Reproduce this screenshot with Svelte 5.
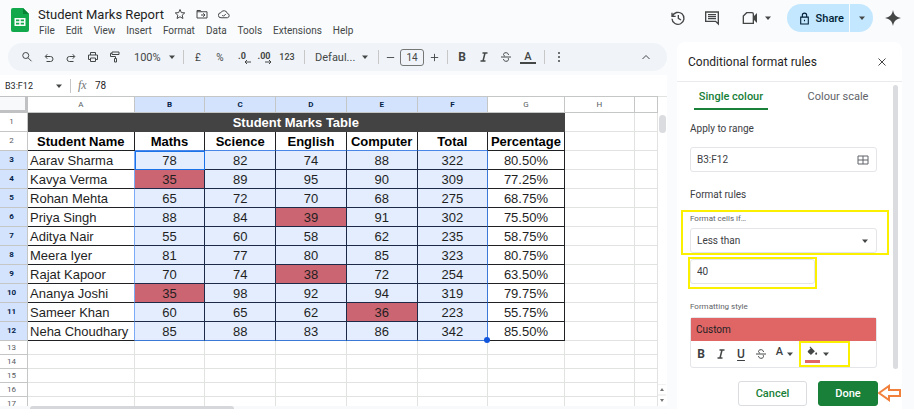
<script>
    // Sheet
    const menus = ["File", "Edit", "View", "Insert", "Format", "Data", "Tools", "Extensions", "Help"];
    const columns = ["A", "B", "C", "D", "E", "F", "G", "H", ""];
    const headings = ["Student Name", "Maths", "Science", "English", "Computer", "Total", "Percentage"];
    const students = [
        ["Aarav Sharma", 78, 82, 74, 88, 322, "80.50%"],
        ["Kavya Verma", 35, 89, 95, 90, 309, "77.25%"],
        ["Rohan Mehta", 65, 72, 70, 68, 275, "68.75%"],
        ["Priya Singh", 88, 84, 39, 91, 302, "75.50%"],
        ["Aditya Nair", 55, 60, 58, 62, 235, "58.75%"],
        ["Meera Iyer", 81, 77, 80, 85, 323, "80.75%"],
        ["Rajat Kapoor", 70, 74, 38, 72, 254, "63.50%"],
        ["Ananya Joshi", 35, 98, 92, 94, 319, "79.75%"],
        ["Sameer Khan", 60, 65, 62, 36, 223, "55.75%"],
        ["Neha Choudhary", 85, 88, 83, 86, 342, "85.50%"],
    ];
    const emptyRows = [13, 14, 15, 16, 17];

    // Rule
    let range = $state("B3:F12");
    let condition = $state("Less than");
    let limit = $state("40");
    let tab = $state("single");

    const inRange = (col) => col > 0 && col < 6;
    const matches = (value, col) =>
        inRange(col) && condition === "Less than" && limit !== "" && value < Number(limit);
</script>

{#snippet caret()}
    <svg class="caret" viewBox="0 0 8 8"><path d="M1 2.5h6L4 6z" /></svg>
{/snippet}

<div class="app">
    <header>
        <svg class="logo" viewBox="0 0 18 24">
            <path d="M2 0h10l6 6v16a2 2 0 0 1-2 2H2a2 2 0 0 1-2-2V2a2 2 0 0 1 2-2z" fill="#12a94c" />
            <path d="M12 0l6 6h-6z" fill="#078336" />
            <path d="M3.500 10h11v8h-11z" fill="#fff" />
            <path d="M5 11.500h3.300v1.800H5zM9.700 11.500H13v1.800H9.700zM5 14.700h3.300v1.800H5zM9.700 14.700H13v1.800H9.700z" fill="#12a94c" />
        </svg>
        <div class="heading">
            <div class="title">
                <h1>Student Marks Report</h1>
                <button aria-label="Star">
                    <svg class="line" viewBox="0 0 24 24"><path d="M12 3l2.700 6.200 6.800.6-5.100 4.500 1.500 6.700-5.900-3.500L6.100 21l1.500-6.700-5.100-4.500 6.800-.6z" /></svg>
                </button>
                <button aria-label="Move">
                    <svg class="line" viewBox="0 0 24 24"><path d="M2 5h7l2 2.500h11V20H2zM2 7.500h9M10 14h8M14.500 10.500L18 14l-3.500 3.500" /></svg>
                </button>
                <button aria-label="Saved to Drive">
                    <svg class="line" viewBox="0 0 24 24"><path d="M6 19.500a5 5 0 0 1-.5-10 7 7 0 0 1 13.200 1.500 4.300 4.300 0 0 1 0 8.500zM8.500 14l2.500 2.500 4.500-4.500" /></svg>
                </button>
            </div>
            <nav>
                {#each menus as menu}
                    <button>{menu}</button>
                {/each}
            </nav>
        </div>
        <div class="actions">
            <button aria-label="Version history">
                <svg class="line" viewBox="0 0 24 24"><path d="M3 4v5.500h5.500M3.500 9.500a9 9 0 1 1-.5 3.500M12.500 7.500v5l4 2.500" /></svg>
            </button>
            <button aria-label="Comments">
                <svg class="line" viewBox="0 0 24 24"><path d="M2.500 3h19v18l-4-4h-15zM6 7h12M6 10h12M6 13h12" /></svg>
            </button>
            <button class="meet" aria-label="Video call">
                <svg class="line" viewBox="0 0 24 24"><path d="M7 4h8a2 2 0 0 1 2 2v14H2V9z" /><path d="M18 10.500L21.500 7v10L18 13.500z" fill="#444746" /></svg>
                {@render caret()}
            </button>
            <div class="share">
                <button>
                    <svg class="line" viewBox="0 0 24 24"><path d="M5 9.500h14V22H5zM8 9.500V6a4 4 0 0 1 8 0v3.500M12 14.500v2.500" /></svg>
                    Share
                </button>
                <button class="more" aria-label="Share options">{@render caret()}</button>
            </div>
            <button aria-label="Gemini">
                <svg class="spark" viewBox="0 0 24 24"><path d="M12 0c1.500 7.500 4.500 10.500 12 12-7.500 1.500-10.500 4.500-12 12C10.500 16.500 7.500 13.500 0 12 7.500 10.500 10.500 7.500 12 0z" /></svg>
            </button>
        </div>
    </header>

    <div class="body">
        <main>
            <div class="toolbar">
                <button aria-label="Search"><svg class="line" viewBox="0 0 24 24"><circle cx="9.500" cy="9" r="6" /><path d="M14 13.500l7 7" /></svg></button>
                <button aria-label="Undo"><svg class="line" viewBox="0 0 24 24"><path d="M8.500 6.500l-4 4.500 4 4.500M5 11h10a5 5 0 0 1 0 10H7" /></svg></button>
                <button aria-label="Redo"><svg class="line" viewBox="0 0 24 24"><path d="M15.500 6.500l4 4.500-4 4.500M19 11H9a5 5 0 0 0 0 10h8" /></svg></button>
                <button aria-label="Print"><svg class="line" viewBox="0 0 24 24"><path d="M7 8V3h10v5M7 17H3V8h18v9h-4M7 14h10v7H7z" /></svg></button>
                <button aria-label="Paint format"><svg class="line" viewBox="0 0 24 24"><path d="M6 2h14v5H6zM6 4.500H3V11h10v4M11 15h4v7h-4z" /></svg></button>
                <button class="zoom">100% {@render caret()}</button>
                <i></i>
                <button class="small">£</button>
                <button class="small">%</button>
                <button class="decimal" aria-label="Decrease decimal places">.0<svg viewBox="0 0 8 6"><path d="M8 3H2M4 1L2 3l2 2" /></svg></button>
                <button class="decimal" aria-label="Increase decimal places">.00<svg viewBox="0 0 8 6"><path d="M0 3h6M4 1l2 2-2 2" /></svg></button>
                <button class="small number">123</button>
                <i></i>
                <button class="font">Defaul... {@render caret()}</button>
                <i></i>
                <button class="step" aria-label="Decrease font size"><svg class="line" viewBox="0 0 24 24"><path d="M4 12h16" /></svg></button>
                <input class="size" aria-label="Font size" value="14" />
                <button class="step" aria-label="Increase font size"><svg class="line" viewBox="0 0 24 24"><path d="M4 12h16M12 4v16" /></svg></button>
                <i></i>
                <button class="bold">B</button>
                <button aria-label="Italic"><svg class="line heavy" viewBox="0 0 24 24"><path d="M9 4h10M5 20h10M14 4l-4 16" /></svg></button>
                <button aria-label="Strikethrough"><svg class="line" viewBox="0 0 24 24"><path d="M2 12h20M17 8c0-6-10-6-10-1 0 2 2 3 3 3M7 16c0 6 10 6 10 1 0-1 0-2-1-3" /></svg></button>
                <button class="colour">A</button>
                <i></i>
                <button aria-label="More"><svg viewBox="0 0 24 24"><circle cx="12" cy="4" r="2" /><circle cx="12" cy="12" r="2" /><circle cx="12" cy="20" r="2" /></svg></button>
                <button class="collapse" aria-label="Hide the menus"><svg class="line" viewBox="0 0 24 24"><path d="M5 16l7-7 7 7" /></svg></button>
            </div>

            <div class="formula">
                <button>B3:F12 {@render caret()}</button>
                <i></i>
                <em>fx</em>
                <input aria-label="Formula" value="78" />
            </div>

            <div class="sheet">
                <div class="grid">
                    <table>
                        <colgroup>
                            <col class="c-num" /><col class="c-name" />
                            <col /><col /><col /><col /><col />
                            <col class="c-pct" /><col class="c-h" /><col class="c-rest" />
                        </colgroup>
                        <thead>
                            <tr>
                                <th class="corner" aria-label="Select all"></th>
                                {#each columns as name, i}
                                    <th class:picked={inRange(i)}>{name}</th>
                                {/each}
                            </tr>
                        </thead>
                        <tbody>
                            <tr>
                                <th>1</th>
                                <td class="banner" colspan="7">Student Marks Table</td>
                                <td></td><td></td>
                            </tr>
                            <tr class="names">
                                <th>2</th>
                                {#each headings as name, i}
                                    <td class="filled" class:above={inRange(i)}>{name}</td>
                                {/each}
                                <td></td><td></td>
                            </tr>
                            {#each students as student, r}
                                <tr class:last={r === students.length - 1}>
                                    <th class="picked">{r + 3}</th>
                                    {#each student as value, i}
                                        <td
                                            class="filled"
                                            class:name={i === 0}
                                            class:range={inRange(i)}
                                            class:edge={i === 5}
                                            class:low={matches(value, i)}
                                            class:active={r === 0 && i === 1}
                                        >
                                            {value}
                                            {#if i === 5 && r === students.length - 1}<span class="handle"></span>{/if}
                                        </td>
                                    {/each}
                                    <td></td><td></td>
                                </tr>
                            {/each}
                            {#each emptyRows as row}
                                <tr class="empty">
                                    <th>{row}</th>
                                    {#each columns as _}<td></td>{/each}
                                </tr>
                            {/each}
                        </tbody>
                    </table>
                </div>
                <div class="vbar">
                    <span></span>
                    <svg viewBox="0 0 8 22"><path d="M2 7l2-3 2 3zM2 15h4l-2 3z" /><path class="rule" d="M0 0h8M0 11h8" /></svg>
                </div>
            </div>
            <div class="hbar"><span></span></div>
        </main>

        <aside>
            <div class="top">
                <h2>Conditional format rules</h2>
                <button aria-label="Close"><svg class="line" viewBox="0 0 24 24"><path d="M5 5l14 14M19 5L5 19" /></svg></button>
            </div>
            <div class="scroll">
                <div class="form">
                    <div class="tabs">
                        <button class:on={tab === "single"} onclick={() => (tab = "single")}>Single colour</button>
                        <button class:on={tab === "scale"} onclick={() => (tab = "scale")}>Colour scale</button>
                    </div>
                    <label class="main" for="range">Apply to range</label>
                    <div class="field">
                        <input id="range" bind:value={range} />
                        <svg class="line" viewBox="0 0 24 24"><path d="M2 4h20v16H2zM12 4v16M2 12h20" /></svg>
                    </div>
                    <h3>Format rules</h3>
                    <div class="mark rule-mark">
                        <label for="condition">Format cells if…</label>
                        <div class="field">
                            <select id="condition" bind:value={condition}>
                                <option>Less than</option>
                                <option>Greater than</option>
                            </select>
                            {@render caret()}
                        </div>
                    </div>
                    <div class="mark limit-mark">
                        <div class="field"><input aria-label="Value or formula" bind:value={limit} /></div>
                    </div>
                    <p>Formatting style</p>
                    <div class="style">
                        <button class="custom">Custom</button>
                        <div class="tools">
                            <button class="bold">B</button>
                            <button aria-label="Italic"><svg class="line heavy" viewBox="0 0 24 24"><path d="M9 4h10M5 20h10M14 4l-4 16" /></svg></button>
                            <button class="under">U</button>
                            <button aria-label="Strikethrough"><svg class="line" viewBox="0 0 24 24"><path d="M2 12h20M17 8c0-6-10-6-10-1 0 2 2 3 3 3M7 16c0 6 10 6 10 1 0-1 0-2-1-3" /></svg></button>
                            <button class="text"><b>A</b>{@render caret()}</button>
                            <button class="fill mark" aria-label="Fill colour">
                                <svg viewBox="0 0 24 24"><path d="M7 1L5.500 2.500 8 5l-6 6c-.7.700-.7 1.700 0 2.400l5.300 5.300c.7.700 1.700.7 2.400 0l7.500-7.500zM20 13s-2.200 2.600-2.200 4a2.200 2.200 0 0 0 4.400 0c0-1.400-2.200-4-2.200-4z" /></svg>
                                {@render caret()}
                            </button>
                        </div>
                    </div>
                </div>
                <span class="thumb"></span>
            </div>
            <div class="buttons">
                <button>Cancel</button>
                <button class="done">Done</button>
                <svg class="arrow" viewBox="0 0 24 18"><path d="M1 9l10-7v4h11v6H11v4z" /></svg>
            </div>
        </aside>
    </div>
</div>

<style>
    :global(body) {
        margin: 0;
        background: #f9fbfd;
    }
    .app {
        display: flex;
        flex-direction: column;
        height: 100vh;
        overflow: hidden;
        font-family: Roboto, "Liberation Sans", sans-serif;
        font-size: 11px;
        color: #444746;
    }
    .app * {
        box-sizing: border-box;
    }
    h1, h2, h3, p {
        margin: 0;
        font-weight: 400;
    }
    button, input, select {
        font: inherit;
        color: inherit;
        border: 0;
        padding: 0;
        margin: 0;
        background: none;
        min-width: 0;
    }
    button {
        display: flex;
        align-items: center;
        justify-content: center;
        white-space: nowrap;
    }
    svg {
        width: 12px;
        height: 12px;
        flex: none;
        fill: #444746;
    }
    .line {
        fill: none;
        stroke: #444746;
        stroke-width: 2;
    }
    .heavy {
        stroke-width: 3;
    }
    .caret {
        width: 8px;
        height: 8px;
    }

    /* Header */
    header {
        display: flex;
        height: 42px;
        flex: none;
    }
    .logo {
        width: 18px;
        height: 24px;
        margin: 8px 9px 0 11px;
    }
    .heading {
        flex: 1;
    }
    .title {
        display: flex;
        align-items: center;
        height: 20px;
        margin-top: 4px;
        gap: 10px;
    }
    .title h1 {
        font-size: 13px;
        color: #1f1f1f;
    }
    nav {
        display: flex;
        gap: 11px;
        height: 12px;
        padding-left: 1px;
        font-size: 10px;
    }
    .actions {
        display: flex;
        align-items: center;
        height: 36px;
        gap: 18px;
        padding-right: 13px;
    }
    .actions svg {
        width: 16px;
        height: 16px;
    }
    .actions .caret {
        width: 8px;
        height: 8px;
    }
    .meet {
        gap: 6px;
        margin-left: 4px;
    }
    .share {
        display: flex;
        height: 28px;
        border-radius: 14px;
        background: #c2e7ff;
        color: #001d35;
        font-weight: 500;
        margin: 0 -6px 0 -3px;
    }
    .share button {
        gap: 5px;
        padding: 0 5px 0 11px;
    }
    .share .line {
        width: 13px;
        height: 13px;
        stroke: #001d35;
    }
    .share .more {
        width: 24px;
        padding: 0;
        border-left: 1px solid #f9fbfd;
    }

    /* Layout */
    .body {
        display: flex;
        flex: 1;
        min-height: 0;
    }
    main {
        display: flex;
        flex-direction: column;
        flex: 1;
        min-width: 0;
    }

    /* Toolbar */
    .toolbar {
        display: flex;
        align-items: center;
        height: 28px;
        flex: none;
        margin: 1px 0 4px 8px;
        padding: 0 10px 0 8px;
        border-radius: 14px;
        background: #f0f4f9;
    }
    .toolbar button {
        width: 22px;
        height: 22px;
        flex: none;
    }
    .toolbar i, .formula i {
        width: 1px;
        height: 14px;
        flex: none;
        margin: 0 3px 0 5px;
        background: #c7c7c7;
    }
    .toolbar .zoom {
        width: 52px;
        justify-content: space-between;
        padding: 0 2px 0 8px;
    }
    .toolbar .font {
        width: 65px;
        justify-content: space-between;
        padding: 0 4px 0 7px;
    }
    .toolbar .small {
        font-size: 10px;
    }
    .toolbar .number {
        width: 24px;
        font-size: 9px;
        font-weight: 500;
    }
    .toolbar .decimal {
        position: relative;
        font-size: 9px;
        font-weight: 700;
        padding-bottom: 3px;
    }
    .decimal svg {
        position: absolute;
        right: 2px;
        bottom: 3px;
        width: 8px;
        height: 6px;
        fill: none;
        stroke: #444746;
    }
    .toolbar .step {
        width: 16px;
    }
    .step svg {
        width: 11px;
        height: 11px;
    }
    .size {
        width: 24px;
        height: 17px;
        margin: 0 2px;
        border: 1px solid #747775;
        border-radius: 3px;
        font-size: 10px;
        text-align: center;
    }
    .bold {
        font-size: 12px;
        font-weight: 700;
    }
    .toolbar .colour {
        width: 16px;
        height: 14px;
        margin: 0 3px;
        border-bottom: 2px solid #444746;
        font-weight: 500;
    }
    .toolbar .collapse {
        margin-left: auto;
    }

    /* Formula bar */
    .formula {
        display: flex;
        align-items: center;
        height: 21px;
        flex: none;
        background: #fff;
        color: #1f1f1f;
        font-size: 9px;
    }
    .formula button {
        width: 65px;
        justify-content: space-between;
        padding: 0 2px 0 5px;
    }
    .formula em {
        width: 21px;
        padding-left: 4px;
        font-family: "Liberation Serif", serif;
        font-size: 12px;
        color: #747775;
    }
    .formula input {
        flex: 1;
        font-size: 10px;
    }

    /* Sheet */
    .sheet {
        display: flex;
        flex: 1;
        min-height: 0;
        background: #fff;
    }
    .grid {
        flex: 1;
        overflow: hidden;
    }
    table {
        width: 100%;
        table-layout: fixed;
        border-collapse: separate;
        border-spacing: 0;
        font-family: "Liberation Sans", Arial, sans-serif;
        font-size: 13px;
        line-height: 15px;
        color: #1f1f1f;
    }
    .c-num {
        width: 4.26%;
    }
    .c-name {
        width: 16.2%;
    }
    .c-pct {
        width: 11.6%;
    }
    .c-h {
        width: 10.7%;
    }
    .c-rest {
        width: 3.5%;
    }
    th, td {
        height: 19px;
        padding: 0;
        border: solid #e1e3e1;
        border-width: 0 1px 1px 0;
        text-align: center;
        white-space: nowrap;
    }
    th {
        padding-right: 4px;
        font-family: Roboto, "Liberation Sans", sans-serif;
        font-size: 8px;
        line-height: 10px;
        font-weight: 400;
        color: #575b5f;
        border-color: #c4c7c5;
    }
    thead th {
        height: 17px;
        padding: 0;
        border-top: 1px solid #c4c7c5;
    }
    .picked {
        background: #d3e3fd;
        color: #041e49;
        font-weight: 700;
    }
    .corner {
        background: #f8f9fa;
        border: solid #bfc1c3;
        border-width: 1px 3px 3px 0;
    }
    .banner {
        background: #434343;
        border-color: #434343;
        color: #fff;
        font-weight: 700;
    }
    .filled {
        border-color: #202124;
    }
    .names td {
        font-weight: 700;
        color: #000;
    }
    .names .above {
        border-bottom-color: #4a86e8;
    }
    .name {
        padding-left: 2px;
        text-align: left;
        border-right-color: #7baaf7;
    }
    .range {
        position: relative;
        background: #e3edfd;
        border-color: #1c2a48;
    }
    .edge {
        border-right-color: #3b78d8;
    }
    .last .range {
        border-bottom-color: #3b78d8;
    }
    .low {
        background: #cb6572;
    }
    .active {
        outline: 1px solid #1a73e8;
        outline-offset: -1px;
    }
    .handle {
        position: absolute;
        right: -3px;
        bottom: -3px;
        z-index: 1;
        width: 6px;
        height: 6px;
        border-radius: 50%;
        background: #1155dc;
    }
    .empty th, .empty td {
        height: 14px;
        line-height: 10px;
    }
    .vbar {
        display: flex;
        flex-direction: column;
        justify-content: space-between;
        width: 9px;
        padding-top: 18px;
        border-top: 1px solid #e1e3e1;
    }
    .vbar span {
        width: 7px;
        height: 18px;
        margin-left: 1px;
        border-radius: 4px;
        background: #dadce0;
    }
    .vbar svg {
        width: 8px;
        height: 22px;
        fill: #747775;
    }
    .vbar .rule {
        stroke: #e1e3e1;
    }
    .hbar {
        height: 3px;
        flex: none;
        padding-left: 30px;
        background: #f8f9fa;
    }
    .hbar span {
        display: block;
        width: 32%;
        height: 3px;
        border-radius: 3px 3px 0 0;
        background: #d5d7da;
    }

    /* Side panel */
    aside {
        display: flex;
        flex-direction: column;
        width: 225px;
        flex: none;
        margin: 0 12px 0 10px;
        border-radius: 8px 8px 0 0;
        background: #fff;
        color: #3c4043;
    }
    .top {
        display: flex;
        align-items: center;
        justify-content: space-between;
        height: 40px;
        flex: none;
        padding: 0 14px 0 11px;
        border-bottom: 1px solid #e8eaed;
    }
    .top h2 {
        font-size: 12px;
        color: #1f1f1f;
    }
    .scroll {
        display: flex;
        flex: 1;
        min-height: 0;
    }
    .form {
        flex: 1;
        min-width: 0;
        padding: 3px 16px 0 13px;
        font-size: 10px;
    }
    .thumb {
        width: 5px;
        margin: 3px 4px 0 0;
        border-radius: 3px;
        background: #dadce0;
    }
    .tabs {
        display: flex;
        justify-content: space-between;
        margin: 0 2px 0 4px;
        font-size: 11px;
    }
    .tabs button {
        width: 74px;
        height: 25px;
        border-bottom: 2px solid transparent;
        color: #5f6368;
    }
    .tabs .on {
        border-color: #188038;
        color: #188038;
        font-weight: 500;
    }
    .form label, h3, p {
        display: block;
        font-size: 8px;
        line-height: 12px;
        color: #5f6368;
    }
    .form .main, h3 {
        font-size: 10px;
        line-height: 14px;
        color: #3c4043;
    }
    .form .main {
        margin: 12px 0 11px;
    }
    h3 {
        margin: 16px 0 8px;
    }
    .field {
        display: flex;
        align-items: center;
        height: 25px;
        padding-right: 7px;
        border: 1px solid #e3e5e8;
        border-radius: 3px;
    }
    .field input, .field select {
        flex: 1;
        height: 23px;
        padding-left: 6px;
        appearance: none;
    }
    .field .line {
        stroke: #5f6368;
    }
    .mark {
        border: 2px solid #fbf000;
    }
    .rule-mark {
        margin: 0 -12px 0 -9px;
        padding: 0 10px 0 7px;
    }
    .rule-mark label {
        padding: 1px 0 3px;
    }
    .limit-mark {
        width: 69%;
        margin: 2px 0 0 -2px;
        padding-bottom: 3px;
    }
    p {
        margin: 12px 0 4px;
    }
    .style {
        border: 1px solid #e3e5e8;
        border-radius: 3px;
    }
    .custom {
        width: 100%;
        height: 23px;
        justify-content: flex-start;
        padding-left: 5px;
        background: #e06666;
        color: #202124;
    }
    .tools {
        display: flex;
        align-items: center;
        height: 26px;
    }
    .tools button {
        width: 20px;
        height: 20px;
    }
    .under {
        font-size: 12px;
        font-weight: 500;
        text-decoration: underline;
        text-underline-offset: 2px;
    }
    .tools .text {
        width: 28px;
        gap: 3px;
    }
    .text b {
        font-size: 11px;
        font-weight: 500;
        padding-bottom: 5px;
    }
    .tools .fill {
        width: 51px;
        height: 26px;
        justify-content: flex-start;
        padding-left: 4px;
        gap: 2px;
    }
    .fill svg:first-child {
        width: 15px;
        height: 17px;
        padding: 0 2px 3px;
        border-bottom: 3px solid #e06666;
    }
    .buttons {
        display: flex;
        justify-content: flex-end;
        gap: 11px;
        position: relative;
        height: 40px;
        flex: none;
        padding: 12px 24px 3px 0;
        font-weight: 500;
    }
    .buttons button {
        width: 69px;
        border: 1px solid #dadce0;
        border-radius: 3px;
        color: #188038;
    }
    .buttons .done {
        width: 60px;
        border-color: #188038;
        background: #188038;
        color: #fff;
    }
    .arrow {
        position: absolute;
        right: 0;
        top: 15px;
        width: 24px;
        height: 18px;
        fill: #fff;
        stroke: #f0803c;
        stroke-width: 2;
    }
</style>
